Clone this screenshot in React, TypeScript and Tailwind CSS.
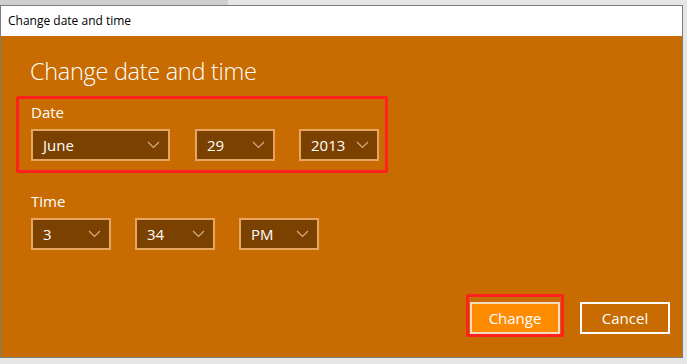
const font = { fontFamily: "'Open Sans', 'Noto Sans', sans-serif" };

type DropProps = { label: string; width: string };

const Chevron = () => (
    <svg width="13" height="8" viewBox="0 0 13 8" fill="none">
        <path d="M1 1 L6.5 6.5 L12 1" stroke="#d8b088" strokeWidth="1.1" />
    </svg>
);

const Dropdown = ({ label, width }: DropProps) => (
    <div className={`flex flex-row items-center justify-between h-[32px] ${width} border-2 border-[#e6a561] bg-[#7a4100] pl-[10px] pr-[8px]`}>
        <span className="text-[15px] text-white leading-none">{label}</span>
        <Chevron />
    </div>
);

export default function App() {
    return (
        <div className="w-[687px] h-[364px] bg-[#e6e6e6] overflow-hidden relative" style={font}>
            <div className="h-[5px] w-[228px] bg-[#cfcfcf]" />
            <div className="w-[683px] h-[353px] border border-[#7d7d7d] flex flex-col">
                {/* title bar */}
                <div className="h-[30px] bg-white flex items-center pl-[7px]">
                    <span className="text-[12px] text-black">Change date and time</span>
                </div>

                {/* body */}
                <div className="flex-1 bg-[#c86b00] relative pl-[30px] pt-[19px]">
                    <h1 className="text-[23.5px] font-light text-white leading-[32px] tracking-[-0.3px] -ml-[1px]">Change date and time</h1>

                    <div className="mt-[15px]">
                        <p className="text-[15px] text-white leading-[20px]">Date</p>
                        <div className="flex flex-row mt-[7px]">
                            <Dropdown label="June" width="w-[139px]" />
                            <div className="ml-[25px]"><Dropdown label="29" width="w-[80px]" /></div>
                            <div className="ml-[24px]"><Dropdown label="2013" width="w-[80px]" /></div>
                        </div>
                    </div>

                    <div className="mt-[30px]">
                        <p className="text-[15px] text-white leading-[20px]">Time</p>
                        <div className="flex flex-row mt-[7px]">
                            <Dropdown label="3" width="w-[80px]" />
                            <div className="ml-[24px]"><Dropdown label="34" width="w-[80px]" /></div>
                            <div className="ml-[24px]"><Dropdown label="PM" width="w-[80px]" /></div>
                        </div>
                    </div>

                    <div className="absolute right-[12px] bottom-[23px] flex flex-row gap-[20px]">
                        <button className="w-[90px] h-[32px] border-2 border-[#f4dcc0] bg-[#ff8c00] text-white text-[15px]">Change</button>
                        <button className="w-[90px] h-[32px] border-2 border-white text-white text-[15px]">Cancel</button>
                    </div>

                    {/* annotation boxes */}
                    <div className="absolute left-[15px] top-[60px] w-[372px] h-[77px] border-[3px] border-[#ff2020] rounded-[2px]" />
                    <div className="absolute left-[465px] top-[258px] w-[98px] h-[43px] border-[3px] border-[#ff2020] rounded-[2px]" />
                </div>
            </div>
        </div>
    );
}
